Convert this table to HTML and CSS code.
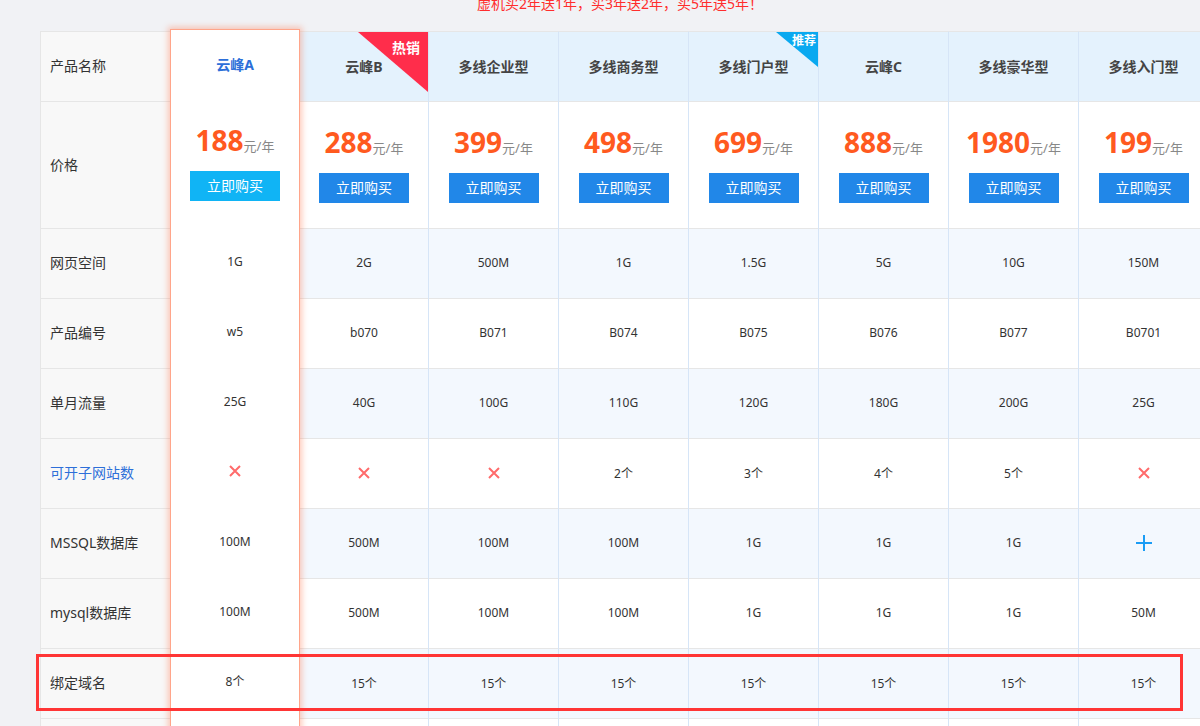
FILE: index.html
```html
<!DOCTYPE html>
<html lang="zh-CN">
<head>
<meta charset="utf-8">
<title>虚拟主机产品对比</title>
<link rel="stylesheet" href="styles.css">
</head>
<body>
<div class="promo">虚机买2年送1年，买3年送2年，买5年送5年！</div>
<div class="compare">
  <div class="col col-label">
    <div class="cell head">产品名称</div>
    <div class="cell price">价格</div>
    <div class="cell">网页空间</div>
    <div class="cell">产品编号</div>
    <div class="cell">单月流量</div>
    <div class="cell link">可开子网站数</div>
    <div class="cell">MSSQL数据库</div>
    <div class="cell">mysql数据库</div>
    <div class="cell">绑定域名</div>
    <div class="cell"></div>
  </div>

  <div class="col col-feature">
    <div class="cell head">云峰A</div>
    <div class="cell price"><div class="amount"><b>188</b><span>元/年</span></div><a class="buy">立即购买</a></div>
    <div class="cell">1G</div>
    <div class="cell">w5</div>
    <div class="cell">25G</div>
    <div class="cell"><svg class="ico-x" viewBox="0 0 12 12"><path d="M1 1L11 11M11 1L1 11"/></svg></div>
    <div class="cell">100M</div>
    <div class="cell">100M</div>
    <div class="cell">8个</div>
    <div class="cell"></div>
  </div>

  <div class="col col-data col-first">
    <div class="cell head">云峰B<span class="tag tag-hot">热销</span></div>
    <div class="cell price"><div class="amount"><b>288</b><span>元/年</span></div><a class="buy">立即购买</a></div>
    <div class="cell alt">2G</div>
    <div class="cell">b070</div>
    <div class="cell alt">40G</div>
    <div class="cell"><svg class="ico-x" viewBox="0 0 12 12"><path d="M1 1L11 11M11 1L1 11"/></svg></div>
    <div class="cell alt">500M</div>
    <div class="cell">500M</div>
    <div class="cell alt">15个</div>
    <div class="cell"></div>
  </div>

  <div class="col col-data">
    <div class="cell head">多线企业型</div>
    <div class="cell price"><div class="amount"><b>399</b><span>元/年</span></div><a class="buy">立即购买</a></div>
    <div class="cell alt">500M</div>
    <div class="cell">B071</div>
    <div class="cell alt">100G</div>
    <div class="cell"><svg class="ico-x" viewBox="0 0 12 12"><path d="M1 1L11 11M11 1L1 11"/></svg></div>
    <div class="cell alt">100M</div>
    <div class="cell">100M</div>
    <div class="cell alt">15个</div>
    <div class="cell"></div>
  </div>

  <div class="col col-data">
    <div class="cell head">多线商务型</div>
    <div class="cell price"><div class="amount"><b>498</b><span>元/年</span></div><a class="buy">立即购买</a></div>
    <div class="cell alt">1G</div>
    <div class="cell">B074</div>
    <div class="cell alt">110G</div>
    <div class="cell">2个</div>
    <div class="cell alt">100M</div>
    <div class="cell">100M</div>
    <div class="cell alt">15个</div>
    <div class="cell"></div>
  </div>

  <div class="col col-data">
    <div class="cell head">多线门户型<span class="tag tag-rec">推荐</span></div>
    <div class="cell price"><div class="amount"><b>699</b><span>元/年</span></div><a class="buy">立即购买</a></div>
    <div class="cell alt">1.5G</div>
    <div class="cell">B075</div>
    <div class="cell alt">120G</div>
    <div class="cell">3个</div>
    <div class="cell alt">1G</div>
    <div class="cell">1G</div>
    <div class="cell alt">15个</div>
    <div class="cell"></div>
  </div>

  <div class="col col-data">
    <div class="cell head">云峰C</div>
    <div class="cell price"><div class="amount"><b>888</b><span>元/年</span></div><a class="buy">立即购买</a></div>
    <div class="cell alt">5G</div>
    <div class="cell">B076</div>
    <div class="cell alt">180G</div>
    <div class="cell">4个</div>
    <div class="cell alt">1G</div>
    <div class="cell">1G</div>
    <div class="cell alt">15个</div>
    <div class="cell"></div>
  </div>

  <div class="col col-data">
    <div class="cell head">多线豪华型</div>
    <div class="cell price"><div class="amount"><b>1980</b><span>元/年</span></div><a class="buy">立即购买</a></div>
    <div class="cell alt">10G</div>
    <div class="cell">B077</div>
    <div class="cell alt">200G</div>
    <div class="cell">5个</div>
    <div class="cell alt">1G</div>
    <div class="cell">1G</div>
    <div class="cell alt">15个</div>
    <div class="cell"></div>
  </div>

  <div class="col col-data">
    <div class="cell head">多线入门型</div>
    <div class="cell price"><div class="amount"><b>199</b><span>元/年</span></div><a class="buy">立即购买</a></div>
    <div class="cell alt">150M</div>
    <div class="cell">B0701</div>
    <div class="cell alt">25G</div>
    <div class="cell"><svg class="ico-x" viewBox="0 0 12 12"><path d="M1 1L11 11M11 1L1 11"/></svg></div>
    <div class="cell alt"><svg class="ico-plus" viewBox="0 0 16 16"><path d="M8 0V16M0 8H16"/></svg></div>
    <div class="cell">50M</div>
    <div class="cell alt">15个</div>
    <div class="cell"></div>
  </div>
</div>
<div class="mark"></div>
</body>
</html>
```

FILE: styles.css
```css
html, body {
  margin: 0;
  padding: 0;
  overflow: hidden;
}
body {
  width: 1200px;
  height: 726px;
  position: relative;
  background: #f1f2f5;
  font-family: "Noto Sans", "Noto Sans CJK SC", sans-serif;
  color: #333;
}

.promo {
  margin: -6px 0 0 40px;
  width: 1160px;
  height: 20px;
  line-height: 20px;
  text-align: center;
  font-size: 14px;
  color: #ff2d2d;
}

.compare {
  display: flex;
  align-items: flex-start;
  margin: 17px 0 0 40px;
  width: 1300px;
}

.col {
  flex: none;
  width: 130px;
  display: flex;
  flex-direction: column;
  box-sizing: border-box;
  border-top: 1px solid #e6e6e6;
}

.cell {
  box-sizing: border-box;
  height: 70px;
  padding-bottom: 2px;
  border-bottom: 1px solid #e6e6e6;
  display: flex;
  align-items: center;
  justify-content: center;
  font-size: 12px;
  color: #333;
}
.cell.price {
  height: 127px;
  flex-direction: column;
  justify-content: flex-start;
  padding-top: 23px;
  padding-bottom: 0;
}

/* label column */
.col-label {
  background: #f8f8f8;
  border-left: 1px solid #e6e6e6;
}
.col-label .cell {
  justify-content: flex-start;
  padding-left: 9px;
  padding-bottom: 4px;
  font-size: 14px;
  color: #333;
}
.col-label .cell.price {
  flex-direction: row;
  align-items: center;
  padding-top: 0;
  padding-bottom: 2px;
}
.col-label .link {
  color: #2d6fd9;
}

/* featured column */
.col-feature {
  position: relative;
  z-index: 1;
  margin-top: -2px;
  background: #fff;
  border: 1px solid #ffa58a;
  box-shadow: 0 0 6px 2px rgba(255, 120, 80, 0.4);
}
.col-feature .cell {
  border-bottom: none;
}
.col-feature .head {
  color: #2d6fd9;
  font-weight: bold;
  font-size: 14px;
}
.col-feature .buy {
  background: #10b4f5;
}

/* data columns */
.col-data {
  background: #fff;
  border-left: 1px solid #d6e5f7;
}
.col-data.col-first {
  width: 128px;
  border-left: none;
}
.col-data .head {
  position: relative;
  background: #e4f2fd;
  font-size: 14px;
  font-weight: bold;
  color: #444;
}
.col-data .alt {
  background: #f3f8fe;
}

/* price */
.amount {
  height: 34px;
  line-height: 34px;
  white-space: nowrap;
}
.amount b {
  font-size: 28px;
  font-weight: bold;
  color: #ff5a1f;
}
.amount span {
  font-size: 13px;
  color: #888;
}
.buy {
  display: block;
  margin-top: 14px;
  width: 90px;
  height: 30px;
  line-height: 30px;
  text-align: center;
  font-size: 14px;
  color: #fff;
  background: #2187e8;
}

/* badges */
.tag {
  position: absolute;
  top: 0;
  right: 0;
  z-index: 0;
  display: flex;
  justify-content: flex-end;
  align-items: flex-start;
  box-sizing: border-box;
  color: #fff;
  font-weight: bold;
}
.tag::before {
  content: "";
  position: absolute;
  inset: 0;
  z-index: -1;
  clip-path: polygon(0 0, 100% 0, 100% 100%);
}
.tag-hot {
  width: 70px;
  height: 60px;
  padding: 6px 8px 0 0;
  font-size: 14px;
  line-height: 20px;
}
.tag-hot::before {
  background: #ff2d4b;
}
.tag-rec {
  width: 42px;
  height: 35px;
  padding: 1px 2px 0 0;
  font-size: 12px;
  line-height: 16px;
}
.tag-rec::before {
  background: #0aa9f0;
}

/* icons */
.ico-x {
  width: 12px;
  height: 12px;
}
.ico-x path {
  stroke: #ff6b6b;
  stroke-width: 2;
  fill: none;
}
.ico-plus {
  width: 16px;
  height: 16px;
}
.ico-plus path {
  stroke: #1a9cf5;
  stroke-width: 2;
  fill: none;
}

/* red highlight box over the 绑定域名 row */
.mark {
  position: absolute;
  left: 36px;
  top: 654px;
  width: 1147px;
  height: 57px;
  box-sizing: border-box;
  border: 3px solid #ff3535;
  z-index: 2;
}
```
